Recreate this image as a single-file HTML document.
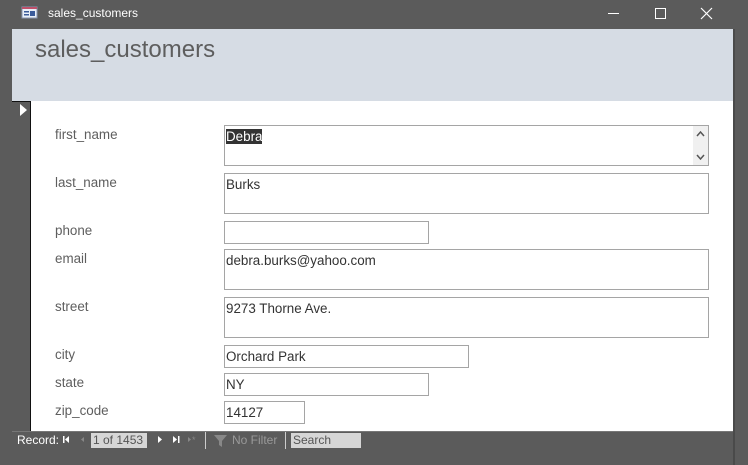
<!DOCTYPE html><html><head><style>
*{margin:0;padding:0;box-sizing:border-box}
body{width:748px;height:465px;background:#5b5b5b;position:relative;overflow:hidden;font-family:"Liberation Sans","DejaVu Sans",sans-serif}
.a{position:absolute}
.lbl{position:absolute;left:55px;font-size:13.4px;color:#5e5e5e}
.in{position:absolute;left:224px;border:1px solid #a5a5a5;background:#fff;font-size:13.4px;color:#333;padding:2px 1px 0 1px;line-height:17px}
.nav{font-size:12px;color:#fff}
</style></head><body>
<svg class="a" style="left:21px;top:6px" width="18" height="14"><rect x="1" y="1" width="15" height="11" fill="#e8eef7" stroke="#8a96b0"/><rect x="1" y="1" width="15" height="2" fill="#c0506a"/><rect x="3" y="5" width="5" height="1.5" fill="#3a5a9a"/><rect x="3" y="8" width="5" height="1.5" fill="#3a5a9a"/><rect x="9" y="5" width="5" height="5" fill="#3a5a9a"/></svg>
<div class="a" style="left:48px;top:6px;font-size:12px;color:#fff">sales_customers</div>
<div class="a" style="left:608px;top:13px;width:11px;height:1px;background:#fff"></div>
<div class="a" style="left:655px;top:8px;width:11px;height:11px;border:1px solid #fff"></div>
<svg class="a" style="left:700px;top:7px" width="13" height="13"><path d="M1 1L12 12M12 1L1 12" stroke="#fff" stroke-width="1.2"/></svg>
<div class="a" style="left:12px;top:29px;width:721px;height:72px;background:#d6dce4"></div>
<div class="a" style="left:35px;top:36px;font-size:24px;color:#5e5e5e">sales_customers</div>
<div class="a" style="left:12px;top:101px;width:721px;height:330px;background:#fff"></div>
<div class="a" style="left:12px;top:101px;width:19px;height:330px;background:#5b5b5b;border-right:1px solid #111;border-top:1px solid #111"></div>
<svg class="a" style="left:19px;top:104px" width="9" height="12"><path d="M1 0L8 6L1 12Z" fill="#fff"/></svg>
<div class="a" style="left:733px;top:29px;width:2px;height:436px;background:#4a4a4a"></div>
<div class="lbl" style="top:127px">first_name</div>
<div class="lbl" style="top:175px">last_name</div>
<div class="lbl" style="top:223px">phone</div>
<div class="lbl" style="top:251px">email</div>
<div class="lbl" style="top:299px">street</div>
<div class="lbl" style="top:347px">city</div>
<div class="lbl" style="top:375px">state</div>
<div class="lbl" style="top:403px">zip_code</div>
<div class="in" style="top:125px;width:485px;height:41px"><span style="background:#333;color:#fff">Debra</span>
<div class="a" style="right:0;top:0;width:15px;height:39px;background:#f0f0f0"></div>
<svg class="a" style="right:3px;top:4px" width="9" height="31"><path d="M1 6L4.5 2L8 6M1 25L4.5 29L8 25" stroke="#555" stroke-width="1.5" fill="none"/></svg></div>
<div class="in" style="top:173px;width:485px;height:41px">Burks</div>
<div class="in" style="top:221px;width:205px;height:23px"></div>
<div class="in" style="top:249px;width:485px;height:41px">debra.burks@yahoo.com</div>
<div class="in" style="top:297px;width:485px;height:41px">9273 Thorne Ave.</div>
<div class="in" style="top:345px;width:245px;height:23px">Orchard Park</div>
<div class="in" style="top:373px;width:205px;height:23px">NY</div>
<div class="in" style="top:401px;width:81px;height:23px">14127</div>
<div class="a" style="left:12px;top:431px;width:721px;height:19px;background:#5b5b5b;border-top:1px solid #777"></div>
<div class="a nav" style="left:17px;top:433px">Record:</div>
<svg class="a" style="left:60px;top:435px" width="150" height="10">
<rect x="3" y="1" width="1.5" height="7" fill="#fff"/><path d="M9 1L5 4.5L9 8Z" fill="#fff"/>
<path d="M24 2L21 4.5L24 7Z" fill="#888"/>
<path d="M98 1L102 4.5L98 8Z" fill="#fff"/>
<path d="M113 1L117 4.5L113 8Z" fill="#fff"/><rect x="118" y="1" width="1.5" height="7" fill="#fff"/>
<path d="M128 2L131 4.5L128 7Z" fill="#888"/><text x="132" y="8" font-size="9" fill="#888">*</text>
</svg>
<div class="a" style="left:91px;top:433px;width:56px;height:15px;background:#d6d6d6;font-size:12px;color:#555;padding-left:2px;line-height:15px">1 of 1453</div>
<div class="a" style="left:205px;top:432px;width:1px;height:17px;background:#ccc"></div>
<svg class="a" style="left:213px;top:434px" width="16" height="14"><path d="M1 1H14L9 7V13L6 11V7Z" fill="#888"/></svg>
<div class="a nav" style="left:232px;top:433px;color:#999">No Filter</div>
<div class="a" style="left:285px;top:432px;width:1px;height:17px;background:#ccc"></div>
<div class="a" style="left:291px;top:433px;width:70px;height:15px;background:#d6d6d6;font-size:12px;color:#555;padding-left:2px;line-height:15px">Search</div>
</body></html>
